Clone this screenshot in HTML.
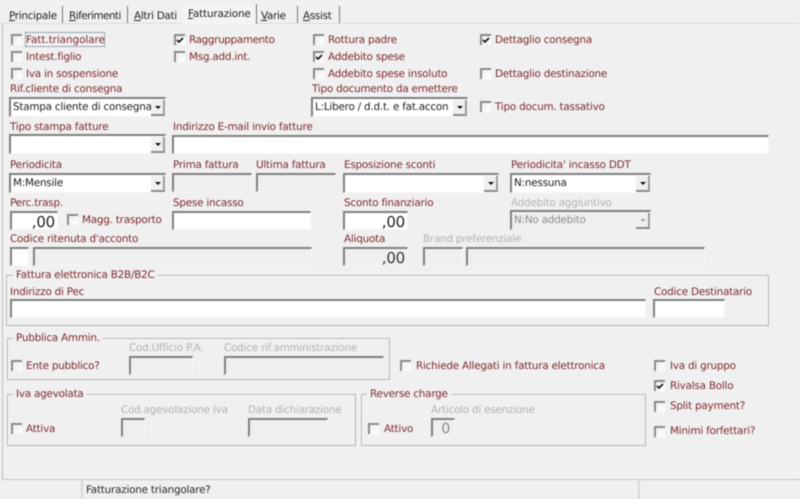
<!DOCTYPE html>
<html><head><meta charset="utf-8">
<style>
html,body{margin:0;padding:0;background:#f0f0f0}
#r{position:relative;width:800px;height:499px;overflow:hidden;background:#f0f0f0;font-family:"DejaVu Sans","Liberation Sans",sans-serif;font-size:10.4px;letter-spacing:-.22px;text-rendering:geometricPrecision;color:#7d2a30;filter:blur(.4px)}
#r div,#r span{position:absolute;white-space:nowrap;box-sizing:border-box}
.t{height:14px;line-height:14px;color:#7d2a30;margin-top:1px}
.d{color:#b2b2b2}
.k{color:#2a2a2a}
.tab{color:#222;height:14px;line-height:14px;top:9px;letter-spacing:-.3px}
.tab u{text-decoration:underline}
.sep{width:1px;background:#777;top:6px;height:17px}
.cb{width:11px;height:11px;background:linear-gradient(135deg,#eee,#fff);border-top:2px solid #8a8a8a;border-left:2px solid #8a8a8a}
.cb svg{position:absolute;left:0;top:0}
.f{background:#fff;border-top:2px solid #808080;border-left:2px solid #808080;border-bottom:1px solid #f6f6f6;border-right:1px solid #f6f6f6;color:#1c1c1c;line-height:16px;padding-left:2px;font-size:10.4px}
.f.g{background:#efefef;color:#999}
.b{width:14px;height:16px;right:0;bottom:0;background:#f0f0f0;border-right:2px solid #9a9a9a;border-bottom:2px solid #8a8a8a}
.b:after{content:"";position:absolute;left:4px;top:6px;border-left:3px solid transparent;border-right:3px solid transparent;border-top:3px solid #111}
.b.g:after{border-top-color:#aaa}
.gb{border:1px solid #b4b4b4;box-shadow:inset 1px 1px 0 #f8f8f8}
.lg{background:#f0f0f0;padding:0 3px;height:14px;line-height:14px}
.n{font-size:15px;text-align:right;padding:0 2px 0 0;line-height:19px}
</style></head><body>
<div id="r">
<div style="left:2px;top:23px;width:798px;height:1px;background:#dcdcdc"></div>
<div style="left:2px;top:23px;width:1px;height:456px;background:#bdbdbd"></div>
<div style="left:182px;top:4px;width:74px;height:20px;background:#f4f4f4"></div>

<span class="tab" style="left:9px"><u>P</u>rincipale</span><div class="sep" style="left:62px"></div>
<span class="tab" style="left:69px;letter-spacing:-.5px"><u>R</u>iferimenti</span><div class="sep" style="left:127px"></div>
<span class="tab" style="left:134px"><u>A</u>ltri Dati</span>
<span class="tab" style="left:188px;top:7px;letter-spacing:-.15px"><u>F</u>atturazione</span><div class="sep" style="left:256px;top:4px;height:20px"></div>
<span class="tab" style="left:261px"><u>V</u>arie</span><div class="sep" style="left:297px"></div>
<span class="tab" style="left:303px"><u>A</u>ssist</span><div class="sep" style="left:339px"></div>

<div class="cb" style="left:11px;top:34px"></div>
<div style="left:25px;top:32px;width:80px;height:15px;border:1px dotted #44606a"></div>
<span class="t" style="left:26px;top:32px;letter-spacing:-.05px">Fatt.triangolare</span>
<div class="cb" style="left:11px;top:51px"></div><span class="t" style="left:26px;top:49px">Intest.figlio</span>
<div class="cb" style="left:11px;top:68px"></div><span class="t" style="left:26px;top:66px">Iva in sospensione</span>

<div class="cb" style="left:174px;top:34px"><svg width="9" height="9"><path d="M1 4l2 2 4-4" fill="none" stroke="#111" stroke-width="1.6"/></svg></div><span class="t" style="left:189px;top:32px;letter-spacing:-.35px">Raggruppamento</span>
<div class="cb" style="left:174px;top:51px"></div><span class="t" style="left:189px;top:49px">Msg.add.int.</span>

<div class="cb" style="left:313px;top:34px"></div><span class="t" style="left:328px;top:32px">Rottura padre</span>
<div class="cb" style="left:313px;top:51px"><svg width="9" height="9"><path d="M1 4l2 2 4-4" fill="none" stroke="#111" stroke-width="1.6"/></svg></div><span class="t" style="left:328px;top:49px">Addebito spese</span>
<div class="cb" style="left:313px;top:68px"></div><span class="t" style="left:328px;top:66px">Addebito spese insoluto</span>

<div class="cb" style="left:480px;top:34px"><svg width="9" height="9"><path d="M1 4l2 2 4-4" fill="none" stroke="#111" stroke-width="1.6"/></svg></div><span class="t" style="left:495px;top:32px">Dettaglio consegna</span>
<div class="cb" style="left:480px;top:68px"></div><span class="t" style="left:495px;top:66px">Dettaglio destinazione</span>
<div class="cb" style="left:480px;top:101px"></div><span class="t" style="left:495px;top:99px">Tipo docum. tassativo</span>

<span class="t" style="left:10px;top:81px">Rif.cliente di consegna</span>
<span class="t" style="left:312px;top:81px">Tipo documento da emettere</span>
<div class="f" style="left:9px;top:97px;width:157px;height:20px;overflow:hidden">Stampa cliente di consegna<div class="b"></div></div>
<div class="f" style="left:311px;top:97px;width:157px;height:20px;overflow:hidden">L:Libero / d.d.t. e fat.accon<div class="b"></div></div>

<span class="t" style="left:10px;top:119px">Tipo stampa fatture</span>
<span class="t" style="left:173px;top:119px">Indirizzo E-mail invio fatture</span>
<div class="f" style="left:9px;top:134px;width:157px;height:20px"><div class="b"></div></div>
<div class="f" style="left:172px;top:135px;width:597px;height:19px"></div>

<span class="t" style="left:10px;top:157px">Periodicita</span>
<span class="t" style="left:173px;top:157px">Prima fattura</span>
<span class="t" style="left:256px;top:157px">Ultima fattura</span>
<span class="t" style="left:344px;top:157px">Esposizione sconti</span>
<span class="t" style="left:511px;top:157px">Periodicita' incasso DDT</span>
<div class="f" style="left:9px;top:173px;width:157px;height:20px">M:Mensile<div class="b"></div></div>
<div class="f g" style="left:172px;top:173px;width:80px;height:19px"></div>
<div class="f g" style="left:256px;top:173px;width:80px;height:19px"></div>
<div class="f" style="left:343px;top:173px;width:156px;height:20px"><div class="b"></div></div>
<div class="f" style="left:510px;top:173px;width:141px;height:20px">N:nessuna<div class="b"></div></div>

<span class="t" style="left:10px;top:195px">Perc.trasp.</span>
<span class="t" style="left:173px;top:195px">Spese incasso</span>
<span class="t" style="left:344px;top:195px">Sconto finanziario</span>
<span class="t d" style="left:511px;top:195px">Addebito aggiuntivo</span>
<div class="f n" style="left:10px;top:211px;width:48px;height:19px">,00</div>
<div class="cb" style="left:67px;top:214px"></div><span class="t" style="left:82px;top:212px">Magg. trasporto</span>
<div class="f" style="left:172px;top:211px;width:139px;height:19px"></div>
<div class="f n" style="left:343px;top:211px;width:65px;height:19px">,00</div>
<div class="f g" style="left:510px;top:210px;width:141px;height:20px;color:#8c8c8c">N:No addebito<div class="b g"></div></div>

<span class="t" style="left:10px;top:231px">Codice ritenuta d'acconto</span>
<span class="t" style="left:344px;top:231px">Aliquota</span>
<span class="t d" style="left:423px;top:231px">Brand preferenziale</span>
<div class="f" style="left:10px;top:247px;width:19px;height:19px"></div>
<div class="f g" style="left:33px;top:247px;width:279px;height:19px"></div>
<div class="f g n" style="left:343px;top:247px;width:65px;height:19px;color:#333">,00</div>
<div class="f g" style="left:423px;top:247px;width:40px;height:19px"></div>
<div class="f g" style="left:466px;top:247px;width:239px;height:19px"></div>

<div class="gb" style="left:6px;top:275px;width:763px;height:51px"></div>
<span class="t lg" style="left:13px;top:267px">Fattura elettronica B2B/B2C</span>
<span class="t" style="left:10px;top:284px">Indirizzo di Pec</span>
<div class="f" style="left:10px;top:299px;width:636px;height:19px"></div>
<span class="t" style="left:654px;top:284px">Codice Destinatario</span>
<div class="f" style="left:653px;top:299px;width:72px;height:19px"></div>

<div class="gb" style="left:7px;top:338px;width:383px;height:42px"></div>
<span class="t lg" style="left:13px;top:330px">Pubblica Ammin.</span>
<div class="cb" style="left:11px;top:360px"></div><span class="t" style="left:26px;top:358px">Ente pubblico?</span>
<span class="t d" style="left:129px;top:340px">Cod.Ufficio P.A.</span>
<span class="t d" style="left:224px;top:340px">Codice rif.amministrazione</span>
<div class="f g" style="left:129px;top:356px;width:64px;height:19px"></div>
<div class="f g" style="left:224px;top:356px;width:160px;height:19px"></div>

<div class="cb" style="left:400px;top:360px"></div><span class="t" style="left:416px;top:358px">Richiede Allegati in fattura elettronica</span>
<div class="cb" style="left:654px;top:360px"></div><span class="t" style="left:670px;top:358px">Iva di gruppo</span>
<div class="cb" style="left:654px;top:380px"><svg width="9" height="9"><path d="M1 4l2 2 4-4" fill="none" stroke="#111" stroke-width="1.6"/></svg></div><span class="t" style="left:670px;top:378px">Rivalsa Bollo</span>
<div class="cb" style="left:654px;top:401px"></div><span class="t" style="left:670px;top:398px">Split payment?</span>
<div class="cb" style="left:654px;top:426px"></div><span class="t" style="left:670px;top:423px">Minimi forfettari?</span>

<div class="gb" style="left:7px;top:394px;width:349px;height:52px"></div>
<span class="t lg" style="left:13px;top:386px">Iva agevolata</span>
<div class="cb" style="left:11px;top:423px"></div><span class="t" style="left:26px;top:421px">Attiva</span>
<span class="t d" style="left:121px;top:402px">Cod.agevolazione Iva</span>
<span class="t d" style="left:248px;top:402px">Data dichiarazione</span>
<div class="f g" style="left:121px;top:418px;width:24px;height:19px"></div>
<div class="f g" style="left:248px;top:418px;width:80px;height:19px"></div>

<div class="gb" style="left:361px;top:394px;width:285px;height:52px"></div>
<span class="t lg" style="left:367px;top:386px">Reverse charge</span>
<div class="cb" style="left:368px;top:423px"></div><span class="t" style="left:384px;top:421px">Attivo</span>
<span class="t d" style="left:431px;top:402px">Articolo di esenzione</span>
<div class="f g n" style="left:431px;top:418px;width:24px;height:19px;padding-right:4px;color:#888;font-size:14px">0</div>

<div style="left:2px;top:479px;width:798px;height:1px;background:#c4c4c4"></div>
<div style="left:81px;top:479px;width:2px;height:20px;background:#d8d8d8"></div>
<div style="left:638px;top:479px;width:2px;height:20px;background:#d8d8d8"></div>
<span class="t k" style="left:86px;top:482px">Fatturazione triangolare?</span>
</div>
</body></html>
